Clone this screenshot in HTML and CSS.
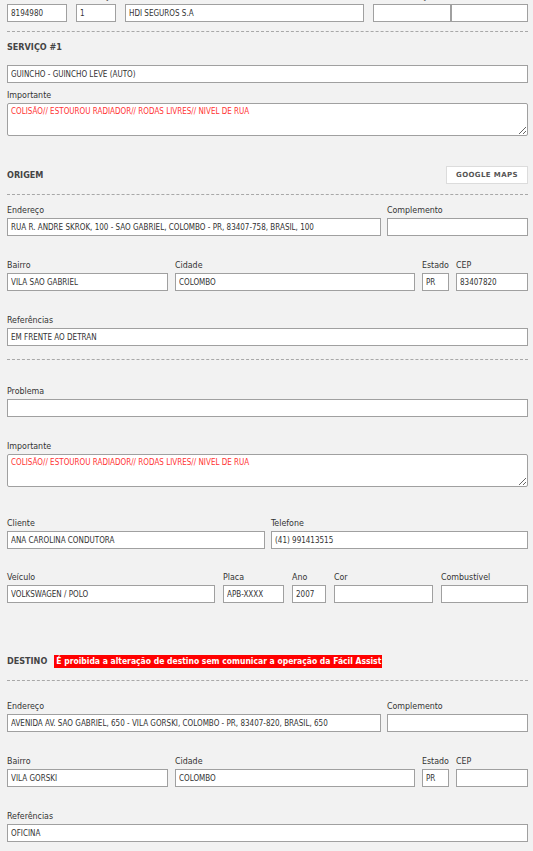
FILE: index.html
```html
<!DOCTYPE html>
<html lang="pt-BR">
<head>
<meta charset="utf-8">
<title>Serviço</title>
<link rel="stylesheet" href="styles.css">
</head>
<body>
<div class="page">
  <div class="row row-top">
    <div class="field"><label class="lbl">Assistência</label><input class="inp" type="text" value="8194980" readonly></div>
    <div class="field"><label class="lbl">Solicitação</label><input class="inp" type="text" value="1" readonly></div>
    <div class="field"><label class="lbl">Produto</label><input class="inp" type="text" value="HDI SEGUROS S.A" readonly></div>
    <div class="field"><label class="lbl">Data solicitação</label>
      <div class="pair"><input class="inp" type="text" value="" readonly><input class="inp" type="text" value="" readonly></div>
    </div>
  </div>

  <div class="sep sep-1"></div>

  <h2 class="heading h-servico">SERVIÇO #1</h2>
  <input class="inp inp-full mt-11" type="text" value="GUINCHO - GUINCHO LEVE (AUTO)" readonly>
  <div class="field mt-6">
    <label class="lbl">Importante</label>
    <textarea class="area" readonly>COLISÃO// ESTOUROU RADIADOR// RODAS LIVRES// NIVEL DE RUA</textarea>
  </div>

  <div class="head-row mt-30">
    <h2 class="heading">ORIGEM</h2>
    <button class="btn" type="button">GOOGLE MAPS</button>
  </div>
  <div class="sep mt-10"></div>

  <div class="row row-end mt-9">
    <div class="field"><label class="lbl">Endereço</label><input class="inp" type="text" value="RUA R. ANDRÉ SKROK, 100 - SÃO GABRIEL, COLOMBO - PR, 83407-758, BRASIL, 100" readonly></div>
    <div class="field"><label class="lbl">Complemento</label><input class="inp" type="text" value="" readonly></div>
  </div>
  <div class="row row-bairro mt-23">
    <div class="field"><label class="lbl">Bairro</label><input class="inp" type="text" value="VILA SÃO GABRIEL" readonly></div>
    <div class="field"><label class="lbl">Cidade</label><input class="inp" type="text" value="COLOMBO" readonly></div>
    <div class="field"><label class="lbl">Estado</label><input class="inp" type="text" value="PR" readonly></div>
    <div class="field"><label class="lbl">CEP</label><input class="inp" type="text" value="83407820" readonly></div>
  </div>
  <div class="field mt-23">
    <label class="lbl">Referências</label><input class="inp" type="text" value="EM FRENTE AO DETRAN" readonly>
  </div>

  <div class="sep mt-13"></div>

  <div class="field mt-25">
    <label class="lbl">Problema</label><input class="inp" type="text" value="" readonly>
  </div>
  <div class="field mt-23">
    <label class="lbl">Importante</label>
    <textarea class="area" readonly>COLISÃO// ESTOUROU RADIADOR// RODAS LIVRES// NIVEL DE RUA</textarea>
  </div>

  <div class="row row-cliente mt-30">
    <div class="field"><label class="lbl">Cliente</label><input class="inp" type="text" value="ANA CAROLINA CONDUTORA" readonly></div>
    <div class="field"><label class="lbl">Telefone</label><input class="inp" type="text" value="(41) 991413515" readonly></div>
  </div>
  <div class="row row-veiculo mt-22">
    <div class="field"><label class="lbl">Veículo</label><input class="inp" type="text" value="VOLKSWAGEN / POLO" readonly></div>
    <div class="field"><label class="lbl">Placa</label><input class="inp" type="text" value="APB-XXXX" readonly></div>
    <div class="field"><label class="lbl">Ano</label><input class="inp" type="text" value="2007" readonly></div>
    <div class="field"><label class="lbl">Cor</label><input class="inp" type="text" value="" readonly></div>
    <div class="field"><label class="lbl">Combustível</label><input class="inp" type="text" value="" readonly></div>
  </div>

  <div class="head-row head-destino mt-51">
    <h2 class="heading">DESTINO</h2>
    <span class="warn">É proibida a alteração de destino sem comunicar a operação da Fácil Assist</span>
  </div>
  <div class="sep mt-12"></div>

  <div class="row row-end mt-19">
    <div class="field"><label class="lbl">Endereço</label><input class="inp" type="text" value="AVENIDA AV. SÃO GABRIEL, 650 - VILA GORSKI, COLOMBO - PR, 83407-820, BRASIL, 650" readonly></div>
    <div class="field"><label class="lbl">Complemento</label><input class="inp" type="text" value="" readonly></div>
  </div>
  <div class="row row-bairro mt-23">
    <div class="field"><label class="lbl">Bairro</label><input class="inp" type="text" value="VILA GORSKI" readonly></div>
    <div class="field"><label class="lbl">Cidade</label><input class="inp" type="text" value="COLOMBO" readonly></div>
    <div class="field"><label class="lbl">Estado</label><input class="inp" type="text" value="PR" readonly></div>
    <div class="field"><label class="lbl">CEP</label><input class="inp" type="text" value="" readonly></div>
  </div>
  <div class="field mt-23">
    <label class="lbl">Referências</label><input class="inp" type="text" value="OFICINA" readonly>
  </div>
</div>
</body>
</html>
```

FILE: styles.css
```css
html, body {
  margin: 0;
  padding: 0;
  background: #f2f2f2;
  overflow: hidden;
}
body {
  font-family: "DejaVu Sans Condensed", "DejaVu Sans", sans-serif;
  color: #333;
}
.page {
  margin-top: -10px;
  padding: 0 5px 0 7px;
}
.field {
  display: flex;
  flex-direction: column;
  min-width: 0;
}
.lbl {
  display: block;
  font-size: 8.8px;
  line-height: 12px;
  height: 12px;
  margin-bottom: 2px;
  color: #333;
  white-space: nowrap;
}
.inp {
  display: block;
  box-sizing: border-box;
  width: 100%;
  height: 18px;
  margin: 0;
  border: 1px solid #a0a0a0;
  border-radius: 0;
  background: #fff;
  padding: 0 3px;
  font-family: "DejaVu Sans Condensed", "DejaVu Sans", sans-serif;
  font-size: 8px;
  line-height: 16px;
  color: #333;
  outline: none;
}
.area {
  display: block;
  box-sizing: border-box;
  width: 100%;
  height: 33px;
  margin: 0;
  border: 1px solid #a0a0a0;
  border-radius: 2px;
  background: #fff;
  padding: 2px 3px;
  font-family: "DejaVu Sans Condensed", "DejaVu Sans", sans-serif;
  font-size: 8px;
  line-height: 11px;
  color: #ff3333;
  outline: none;
}
.row {
  display: grid;
}
.row-top {
  grid-template-columns: 60px 40px 239px 155px;
  column-gap: 9px;
}
.pair {
  display: grid;
  grid-template-columns: 78px 77px;
}
.row-end {
  grid-template-columns: 374px 141px;
  column-gap: 6px;
}
.row-bairro {
  grid-template-columns: 161px 240px 27px 72px;
  column-gap: 7px;
}
.row-cliente {
  grid-template-columns: 258px 257px;
  column-gap: 6px;
}
.row-veiculo {
  grid-template-columns: 208px 61px 34px 99px 87px;
  column-gap: 8px;
}
.sep {
  height: 0;
  border-top: 1px dashed #a8a8a8;
}
.sep-1 { margin-top: 9px; }
.heading {
  margin: 0;
  font-size: 9px;
  line-height: 14px;
  font-weight: bold;
  color: #444;
}
.h-servico { margin-top: 8px; }
.head-row {
  display: flex;
  align-items: center;
  justify-content: space-between;
  height: 18px;
}
.head-destino {
  justify-content: flex-start;
  gap: 7px;
  height: 14px;
}
.btn {
  box-sizing: border-box;
  width: 82px;
  height: 18px;
  margin: 0;
  padding: 0;
  background: #fff;
  border: 1px solid #dcdcdc;
  font-family: "DejaVu Sans", sans-serif;
  font-size: 7px;
  font-weight: bold;
  letter-spacing: 0.4px;
  color: #555;
}
.warn {
  background: #ff0000;
  color: #fff;
  font-size: 8.5px;
  font-weight: bold;
  line-height: 13px;
  padding: 0 1px 0 2px;
  white-space: nowrap;
}
.mt-6 { margin-top: 6px; }
.mt-9 { margin-top: 9px; }
.mt-10 { margin-top: 10px; }
.mt-11 { margin-top: 11px; }
.mt-12 { margin-top: 12px; }
.mt-13 { margin-top: 13px; }
.mt-19 { margin-top: 19px; }
.mt-22 { margin-top: 22px; }
.mt-23 { margin-top: 23px; }
.mt-25 { margin-top: 25px; }
.mt-30 { margin-top: 30px; }
.mt-51 { margin-top: 51px; }
```
